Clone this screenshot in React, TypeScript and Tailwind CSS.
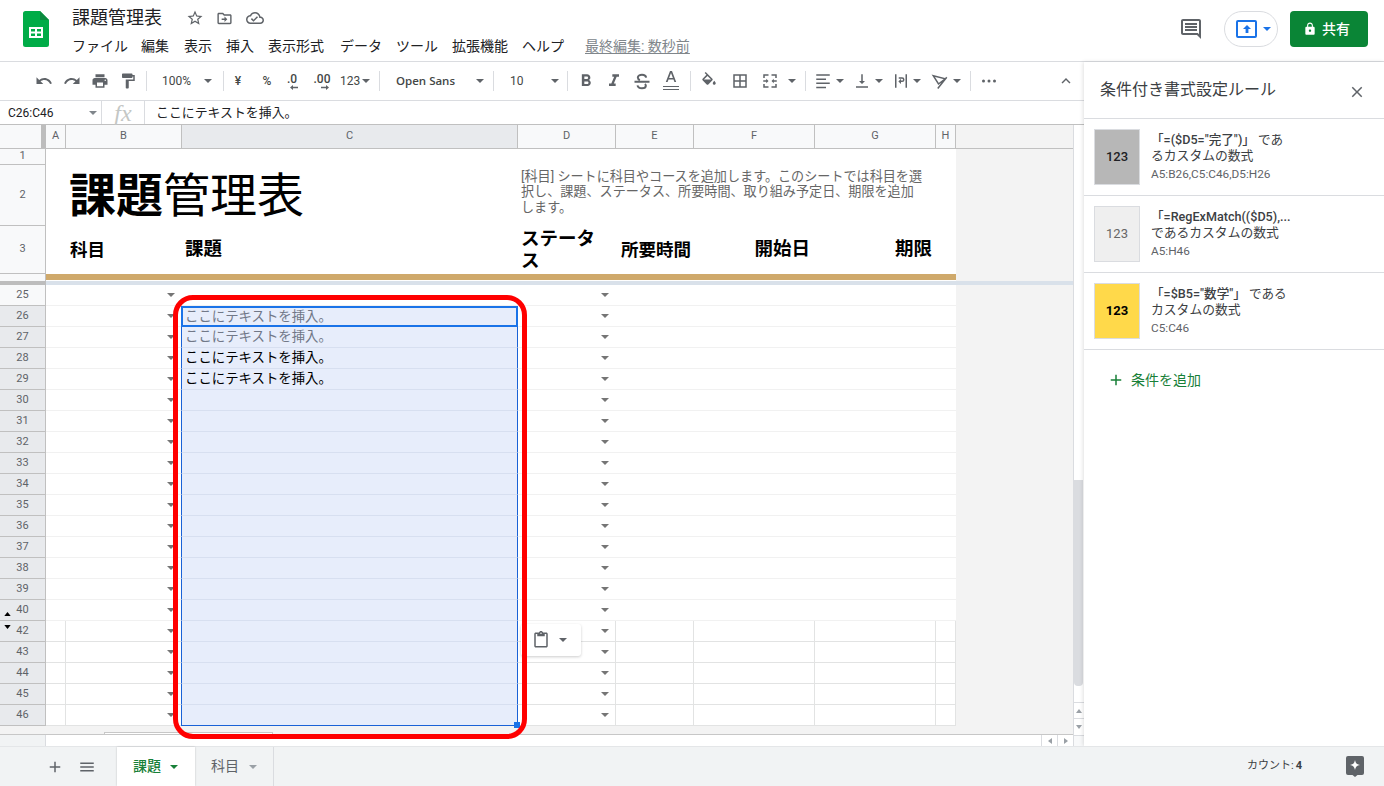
import React from "react";

const Ic = ({ d, s = 18, c = "text-[#5f6368]", ml = "" }: { d: string; s?: number; c?: string; ml?: string }) => (
  <svg viewBox="0 0 24 24" width={s} height={s} className={`shrink-0 fill-current ${c} ${ml}`}>
    <path d={d} />
  </svg>
);
const Caret = ({ ml = "", c = "text-[#5f6368]" }: { ml?: string; c?: string }) => (
  <svg viewBox="0 0 8 4" width={8} height={4} className={`shrink-0 fill-current ${c} ${ml}`}>
    <path d="M0 0h8L4 4z" />
  </svg>
);
const Sep = ({ ml }: { ml: string }) => <div className={`w-px h-5 shrink-0 bg-[#dadce0] ${ml}`} />;

const P = {
  undo: "M12.5 8c-2.65 0-5.05.99-6.9 2.6L2 7v9h9l-3.62-3.62c1.39-1.16 3.16-1.88 5.12-1.88 3.54 0 6.55 2.31 7.6 5.5l2.37-.78C21.08 11.03 17.15 8 12.5 8z",
  redo: "M18.4 10.6C16.55 8.99 14.15 8 11.5 8c-4.65 0-8.58 3.03-9.96 7.22L3.9 16c1.05-3.19 4.05-5.5 7.6-5.5 1.95 0 3.73.72 5.12 1.88L13 16h9V7l-3.6 3.6z",
  print: "M19 8H5c-1.66 0-3 1.34-3 3v6h4v4h12v-4h4v-6c0-1.66-1.34-3-3-3zm-3 11H8v-5h8v5zm3-7c-.55 0-1-.45-1-1s.45-1 1-1 1 .45 1 1-.45 1-1 1zm-1-9H6v4h12V3z",
  paint: "M18 4V3c0-.55-.45-1-1-1H5c-.55 0-1 .45-1 1v4c0 .55.45 1 1 1h12c.55 0 1-.45 1-1V6h1v4H9v11c0 .55.45 1 1 1h2c.55 0 1-.45 1-1v-9h8V4h-3z",
  star: "M22 9.24l-7.19-.62L12 2 9.19 8.63 2 9.24l5.46 4.73L5.82 21 12 17.27 18.18 21l-1.63-7.03L22 9.24zM12 15.4l-3.76 2.27 1-4.28-3.32-2.88 4.38-.38L12 6.1l1.71 4.04 4.38.38-3.32 2.88 1 4.28L12 15.4z",
  folder: "M20 6h-8l-2-2H4c-1.1 0-2 .9-2 2v12c0 1.1.9 2 2 2h16c1.1 0 2-.9 2-2V8c0-1.1-.9-2-2-2zm0 12H4V6h5.17l2 2H20v10zm-8-4H8v-2h4V9l4 4-4 4v-3z",
  cloud: "M19.35 10.04C18.67 6.59 15.64 4 12 4 9.11 4 6.6 5.64 5.35 8.04 2.34 8.36 0 10.91 0 14c0 3.31 2.69 6 6 6h13c2.76 0 5-2.24 5-5 0-2.64-2.05-4.78-4.65-4.96zM19 18H6c-2.21 0-4-1.79-4-4 0-2.05 1.53-3.76 3.56-3.97l1.07-.11.5-.95C8.08 7.14 9.94 6 12 6c2.62 0 4.88 1.86 5.39 4.43l.3 1.5 1.53.11c1.56.1 2.78 1.41 2.78 2.96 0 1.65-1.35 3-3 3zm-9-3.82l-2.09-2.09L6.5 13.5 10 17l6.01-6.01-1.41-1.41z",
  comment: "M21.99 4c0-1.1-.89-2-1.99-2H4c-1.1 0-2 .9-2 2v12c0 1.1.9 2 2 2h14l4 4-.01-18zM20 4v13.17L18.83 16H4V4h16zM6 12h12v2H6zm0-3h12v2H6zm0-3h12v2H6z",
  lock: "M18 8h-1V6c0-2.76-2.24-5-5-5S7 3.24 7 6v2H6c-1.1 0-2 .9-2 2v10c0 1.1.9 2 2 2h12c1.1 0 2-.9 2-2V10c0-1.1-.9-2-2-2zm-6 9c-1.1 0-2-.9-2-2s.9-2 2-2 2 .9 2 2-.9 2-2 2zm3.1-9H8.9V6c0-1.71 1.39-3.1 3.1-3.1 1.71 0 3.1 1.39 3.1 3.1v2z",
  close: "M19 6.41L17.59 5 12 10.59 6.41 5 5 6.41 10.59 12 5 17.59 6.41 19 12 13.41 17.59 19 19 17.59 13.41 12z",
  paste: "M19 2h-4.18C14.4.84 13.3 0 12 0S9.6.84 9.18 2H5c-1.1 0-2 .9-2 2v16c0 1.1.9 2 2 2h14c1.1 0 2-.9 2-2V4c0-1.1-.9-2-2-2zm-7 0c.55 0 1 .45 1 1s-.45 1-1 1-1-.45-1-1 .45-1 1-1zm7 18H5V4h2v3h10V4h2v16z",
  bold: "M15.6 10.79c.97-.67 1.65-1.77 1.65-2.79 0-2.26-1.75-4-4-4H7v14h7.04c2.09 0 3.71-1.7 3.71-3.79 0-1.52-.86-2.82-2.15-3.42zM10 6.5h3c.83 0 1.5.67 1.5 1.5s-.67 1.5-1.5 1.5h-3v-3zm3.5 9H10v-3h3.5c.83 0 1.5.67 1.5 1.5s-.67 1.5-1.5 1.5z",
  italic: "M10 4v3h2.21l-3.42 8H6v3h8v-3h-2.21l3.42-8H18V4z",
  fill: "M16.56 8.94L7.62 0 6.21 1.41l2.38 2.38-5.15 5.15c-.59.59-.59 1.54 0 2.12l5.5 5.5c.29.29.68.44 1.06.44s.77-.15 1.06-.44l5.5-5.5c.59-.58.59-1.53 0-2.12zM5.21 10L10 5.21 14.79 10H5.21zM19 11.5s-2 2.17-2 3.5c0 1.1.9 2 2 2s2-.9 2-2c0-1.33-2-3.5-2-3.5z",
  borders: "M3 3v18h18V3H3zm8 16H5v-6h6v6zm0-8H5V5h6v6zm8 8h-6v-6h6v6zm0-8h-6V5h6v6z",
  align: "M3 3h18v2H3zM3 8.500h13v2H3zM3 14h18v2H3zM3 19.500h13v2H3z",
  valign: "M11 3h2v9h3l-4 4-4-4h3zM4 19h16v2H4z",
  up: "M7.41 15.41L12 10.83l4.59 4.58L18 14l-6-6-6 6z",
  plus: "M19 13h-6v6h-2v-6H5v-2h6V5h2v6h6v2z",
  menu: "M3 18h18v-2H3v2zm0-5h18v-2H3v2zm0-7v2h18V6H3z",
};

const Logo = () => (
  <svg viewBox="0 0 26 36" width={26} height={36} className="shrink-0">
    <path d="M17 0H2.5A2.5 2.5 0 0 0 0 2.5v31A2.5 2.5 0 0 0 2.5 36h21a2.5 2.5 0 0 0 2.5-2.5V9z" fill="#00ac47" />
    <path d="M17 0l9 9h-9z" fill="#0a8a3e" />
    <path fillRule="evenodd" d="M6 16h14v11H6zm2 2v2.500h4V18zm6 0v2.500h4V18zm-6 4.500V25h4v-2.500zm6 0V25h4v-2.500z" fill="#fff" />
  </svg>
);

const Header = () => (
  <header className="h-[62px] shrink-0 border-b border-[#dadce0] flex bg-white">
    <div className="w-[72px] shrink-0 pt-[11px] pl-[23px]"><Logo /></div>
    <div className="flex-1 flex flex-col">
      <div className="flex items-center h-[24px] mt-[6px]">
        <span className="text-[18px] leading-6 text-[#202124] w-[90px]">課題管理表</span>
        <Ic d={P.star} s={18} ml="ml-[24px]" />
        <Ic d={P.folder} s={17} ml="ml-[12px]" />
        <Ic d={P.cloud} s={18} ml="ml-[13px]" />
      </div>
      <nav className="flex items-center mt-[4px] h-[24px] text-[14px] text-[#202124] whitespace-nowrap">
        <span className="w-[55px]">ファイル</span>
        <span className="ml-[14px]">編集</span>
        <span className="ml-[15px]">表示</span>
        <span className="ml-[14px]">挿入</span>
        <span className="ml-[14px]">表示形式</span>
        <span className="ml-[16px]">データ</span>
        <span className="ml-[14px]">ツール</span>
        <span className="ml-[14px]">拡張機能</span>
        <span className="ml-[14px]">ヘルプ</span>
        <span className="ml-[21px] text-[14px] text-[#80868b] underline underline-offset-2">最終編集: 数秒前</span>
      </nav>
    </div>
    <div className="flex items-start pt-[11px] pr-[16px]">
      <Ic d={P.comment} s={24} ml="mt-[6px]" />
      <div className="ml-[21px] w-[54px] h-[36px] rounded-full border border-[#dadce0] flex items-center pl-[11px]">
        <div className="w-[21px] h-[18px] border-2 border-[#1a73e8] rounded-[2px] flex items-center justify-center">
          <svg viewBox="0 0 10 10" width={10} height={10} className="fill-[#1a73e8]"><path d="M5 1 1 5h2.600v4h2.800V5H9z" /></svg>
        </div>
        <Caret ml="ml-[6px]" c="text-[#1a73e8]" />
      </div>
      <div className="ml-[12px] w-[78px] h-[36px] rounded bg-[#0a8536] flex items-center pl-[13px] text-white text-[14px] font-medium">
        <Ic d={P.lock} s={14} c="text-white" />
        <span className="ml-[5px]">共有</span>
      </div>
    </div>
  </header>
);

const Toolbar = () => (
  <div className="h-[39px] shrink-0 border-b border-[#dadce0] flex items-center pl-[35px] text-[12px] text-[#444746]">
    <Ic d={P.undo} />
    <Ic d={P.redo} ml="ml-[10px]" />
    <Ic d={P.print} ml="ml-[10px]" />
    <Ic d={P.paint} ml="ml-[10px]" />
    <Sep ml="ml-[9px]" />
    <span className="ml-[15px] w-[29px]">100%</span>
    <Caret ml="ml-[13px]" />
    <Sep ml="ml-[11px]" />
    <span className="ml-[9px] w-[10px] text-center font-medium">¥</span>
    <span className="ml-[18px] w-[12px] text-center font-medium">%</span>
    <span className="ml-[12px] w-[14px] flex flex-col items-center leading-none font-medium">
      <span className="h-[12px]">.0</span>
      <svg viewBox="0 0 8 5" width={8} height={5} className="fill-[#5f6368] ml-[4px]"><path d="M3 0 0 2.500 3 5V3.300h5V1.700H3z" /></svg>
    </span>
    <span className="ml-[14px] w-[18px] flex flex-col items-center leading-none font-medium">
      <span className="h-[12px]">.00</span>
      <svg viewBox="0 0 8 5" width={8} height={5} className="fill-[#5f6368] ml-[6px]"><path d="M5 0l3 2.500L5 5V3.300H0V1.700h5z" /></svg>
    </span>
    <span className="ml-[9px] w-[21px]">123</span>
    <Caret ml="ml-[1px]" />
    <Sep ml="ml-[9px]" />
    <span className="ml-[16px] w-[58px] font-['Open_Sans'] font-semibold text-[11.5px] whitespace-nowrap">Open Sans</span>
    <Caret ml="ml-[22px]" />
    <Sep ml="ml-[9px]" />
    <span className="ml-[16px] w-[14px]">10</span>
    <Caret ml="ml-[27px]" />
    <Sep ml="ml-[8px]" />
    <Ic d={P.bold} s={20} ml="ml-[8px]" />
    <Ic d={P.italic} s={20} ml="ml-[8px]" />
    <svg viewBox="0 0 24 24" width={20} height={20} className="shrink-0 ml-[8px] fill-none stroke-[#5f6368] stroke-[2.4]">
      <path d="M17 8c-.4-2.400-2.500-3.500-5-3.500-2.800 0-5 1.400-5 3.400 0 1.500 1 2.400 2.500 3M3 13h18M15.500 15.500c.7.600 1.100 1.300 1.100 2.100 0 2-2 3-4.600 3-2.800 0-5-1.200-5.400-3.400" />
    </svg>
    <svg viewBox="0 0 18 24" width={18} height={24} className="shrink-0 ml-[10px] fill-[#5f6368]">
      <path d="M8 2 3.800 13h1.800l.9-2.400h5l.9 2.400h1.800L10 2H8zM7.100 9 9 3.900 10.900 9H7.100z" />
      <path d="M1 17h16v1H1zM1 20h16v1H1z" />
    </svg>
    <Sep ml="ml-[10px]" />
    <Ic d={P.fill} ml="ml-[9px]" />
    <Ic d={P.borders} ml="ml-[13px]" />
    <svg viewBox="0 0 24 24" width={18} height={18} className="shrink-0 ml-[12px] fill-[#5f6368]">
      <path d="M3 3h7v2H5v3H3zM14 3h7v5h-2V5h-5zM3 16h2v3h5v2H3zM19 16h2v5h-7v-2h5zM3 11h4V9l3 3-3 3v-2H3zM21 11h-4V9l-3 3 3 3v-2h4z" />
    </svg>
    <Caret ml="ml-[9px]" />
    <Sep ml="ml-[9px]" />
    <Ic d={P.align} ml="ml-[8px]" />
    <Caret ml="ml-[4px]" />
    <Ic d={P.valign} ml="ml-[9px]" />
    <Caret ml="ml-[4px]" />
    <svg viewBox="0 0 24 24" width={18} height={18} className="shrink-0 ml-[9px] fill-[#5f6368]">
      <path d="M4 3h2v18H4zM18 3h2v18h-2zM9 7h4.500a3.200 3.200 0 0 1 0 6.400H12V16l-3.500-3.500L12 9v2.400h1.500a1.200 1.200 0 0 0 0-2.400H9z" />
    </svg>
    <Caret ml="ml-[3px]" />
    <svg viewBox="0 0 24 24" width={18} height={18} className="shrink-0 ml-[10px] fill-none stroke-[#5f6368] stroke-2">
      <path d="M3 5l16 4-9 7zM21 7 9 22" />
    </svg>
    <Caret ml="ml-[4px]" />
    <Sep ml="ml-[9px]" />
    <svg viewBox="0 0 18 18" width={18} height={18} className="shrink-0 ml-[9px] fill-[#5f6368]">
      <circle cx="3.500" cy="9" r="1.500" /><circle cx="9" cy="9" r="1.500" /><circle cx="14.500" cy="9" r="1.500" />
    </svg>
    <Ic d={P.up} ml="ml-[59px]" />
  </div>
);

const FormulaBar = () => (
  <div className="h-[24px] shrink-0 border-b border-[#c0c0c0] flex items-center text-[#202124]">
    <div className="w-[102px] h-full shrink-0 border-r border-[#dadce0] flex items-center pl-[8px] pt-px text-[12px]">
      <span className="w-[81px]">C26:C46</span>
      <Caret c="text-[#80868b]" />
    </div>
    <div className="w-[43px] h-full shrink-0 border-r border-[#dadce0] flex items-center justify-center font-['Liberation_Serif'] italic text-[24px] text-[#c4c7c5]">fx</div>
    <span className="ml-[11px] pt-px text-[12.9px]">ここにテキストを挿入。</span>
  </div>
);

const rows = [25, 26, 27, 28, 29, 30, 31, 32, 33, 34, 35, 36, 37, 38, 39, 40, 42, 43, 44, 45, 46];
const cellTexts: Record<number, string> = { 26: "text-[#717888]", 27: "text-[#717888]", 28: "text-black", 29: "text-black" };

const ColHead = ({ w, label, sel = false }: { w: string; label: string; sel?: boolean }) => (
  <div className={`${w} h-full shrink-0 border-r border-[#c0c0c0] flex items-center justify-center text-[11px] text-[#5f6368] ${sel ? "bg-[#e8eaed]" : "bg-[#f8f9fa]"}`}>
    {label}
  </div>
);
const RowHead = ({ h, label }: { h: string; label: string }) => (
  <div className={`${h} w-[46px] shrink-0 bg-[#f8f9fa] border-r border-b border-[#c0c0c0] flex items-center justify-center text-[11px] text-[#5f6368]`}>{label}</div>
);

const Tri = () => <Caret c="text-[#757575]" />;

const GridRow = ({ n }: { n: number }) => {
  const ruled = n >= 42;
  const line = ruled ? "border-[#e2e3e3]" : "border-[#f1f1f1]";
  const v = ruled ? "border-r" : "";
  const sel = n >= 26;
  return (
    <div className="flex h-[21px]">
      <div className={`relative w-[46px] shrink-0 border-r border-b border-[#c0c0c0] flex items-center justify-center text-[11px] text-[#5f6368] ${sel ? "bg-[#e8eaed]" : "bg-[#f8f9fa]"}`}>
        {n}
        {n === 40 && <svg viewBox="0 0 8 5" width={7} height={4} className="absolute left-[4px] top-[12px] fill-black"><path d="M0 5h8L4 0z" /></svg>}
        {n === 42 && <svg viewBox="0 0 8 5" width={7} height={4} className="absolute left-[4px] top-[4px] fill-black"><path d="M0 0h8L4 5z" /></svg>}
      </div>
      <div className={`w-[20px] shrink-0 bg-white border-b ${v} ${line}`} />
      <div className={`w-[115px] shrink-0 bg-white border-b ${line} flex items-center justify-end pr-[6px]`}><Tri /></div>
      {n === 25 && <div className="w-[337px] shrink-0 bg-white border-b border-[#f1f1f1]" />}
      {n === 26 && (
        <div className="w-[337px] shrink-0 bg-[#e7edfb] border-2 border-[#1a73e8] flex items-center pl-[2px] pt-px text-[13.4px] text-[#717888]">ここにテキストを挿入。</div>
      )}
      {n > 26 && (
        <div className={`relative w-[337px] shrink-0 bg-[#e7edfb] border-x border-x-[#1a62d6] border-b flex items-center pl-[3px] pt-px text-[13.4px] ${n === 46 ? "border-b-[#1a62d6]" : "border-b-[#d7dff0]"} ${cellTexts[n] ?? ""}`}>
          {cellTexts[n] ? "ここにテキストを挿入。" : ""}
          {n === 46 && <div className="absolute -right-[3px] -bottom-[3px] w-[6px] h-[6px] bg-[#1a73e8]" />}
        </div>
      )}
      <div className={`w-[98px] shrink-0 bg-white border-b ${v} ${line} flex items-center justify-end ${ruled ? "pr-[6px]" : "pr-[7px]"}`}><Tri /></div>
      <div className={`w-[78px] shrink-0 bg-white border-b ${v} ${line}`} />
      <div className={`w-[121px] shrink-0 bg-white border-b ${v} ${line}`} />
      <div className={`w-[121px] shrink-0 bg-white border-b ${v} ${line}`} />
      <div className={`w-[20px] shrink-0 bg-white border-b ${v} ${line}`} />
    </div>
  );
};

const Grid = () => (
  <div className="flex-1 flex min-h-0">
    <div className="w-[1073px] shrink-0 flex flex-col bg-[#f3f3f3]">
      <div className="flex h-[24px] border-b border-[#c0c0c0]">
        <div className="w-[46px] shrink-0 bg-[#f8f9fa] flex justify-end"><div className="w-[5px] h-full bg-[#bdbdbd]" /></div>
        <ColHead w="w-[20px]" label="A" />
        <ColHead w="w-[116px]" label="B" />
        <ColHead w="w-[336px]" label="C" sel />
        <ColHead w="w-[98px]" label="D" />
        <ColHead w="w-[78px]" label="E" />
        <ColHead w="w-[121px]" label="F" />
        <ColHead w="w-[121px]" label="G" />
        <ColHead w="w-[20px]" label="H" />
      </div>
      <div className="flex h-[16px]">
        <RowHead h="h-full" label="1" />
        <div className="w-[910px] bg-white" />
      </div>
      <div className="flex h-[61px]">
        <RowHead h="h-full" label="2" />
        <div className="w-[472px] shrink-0 bg-white pl-[23px] flex items-center text-[47px] text-black leading-none">
          <span className="font-bold">課題</span><span>管理表</span>
        </div>
        <div className="w-[438px] shrink-0 bg-white pl-[3px] pb-[7px] text-[13.1px] leading-[15.5px] text-[#666666] flex items-center whitespace-nowrap">
          <span>[科目] シートに科目やコースを追加します。このシートでは科目を選<br />択し、課題、ステータス、所要時間、取り組み予定日、期限を追加<br />します。</span>
        </div>
      </div>
      <div className="flex h-[48px] text-[18.5px] font-bold text-black">
        <RowHead h="h-full font-normal" label="3" />
        <div className="w-[20px] shrink-0 bg-white" />
        <div className="w-[116px] shrink-0 bg-white pl-[4px] flex items-center text-[17.5px]">科目</div>
        <div className="w-[336px] shrink-0 bg-white pl-[3px] flex items-center">課題</div>
        <div className="w-[98px] shrink-0 bg-white pl-[3px] flex items-center leading-[22px]"><span>ステータ<br />ス</span></div>
        <div className="w-[78px] shrink-0 bg-white pl-[5px] flex items-center whitespace-nowrap text-[17.5px]">所要時間</div>
        <div className="w-[121px] shrink-0 bg-white pr-[5px] flex items-center justify-end">開始日</div>
        <div className="w-[121px] shrink-0 bg-white pr-[4px] flex items-center justify-end">期限</div>
        <div className="w-[20px] shrink-0 bg-white" />
      </div>
      <div className="flex h-[7px]">
        <div className="w-[46px] shrink-0 bg-[#f8f9fa] border-r border-[#c0c0c0]" />
        <div className="w-[910px] bg-white"><div className="h-[6px] bg-[#cfa96b]" /></div>
      </div>
      <div className="flex h-[4px] shrink-0">
        <div className="w-[46px] shrink-0 bg-[#bdbdbd]" />
        <div className="flex-1 bg-[#d9e1ea]" />
      </div>
      <div className="relative flex flex-col">
        {rows.map((n) => <GridRow key={n} n={n} />)}
        <div className="absolute z-20 left-[173px] top-[10px] w-[354px] h-[444px] border-[5px] border-[#ff0000] rounded-[20px]" />
        <div className="absolute z-10 left-[521px] top-[339px] w-[60px] h-[32px] bg-white rounded-[3px] shadow-[0_1px_3px_rgba(0,0,0,0.2)] flex items-center pl-[11px]">
          <Ic d={P.paste} s={18} />
          <Caret ml="ml-[9px]" />
        </div>
      </div>
      <div className="flex h-[9px] shrink-0 border-b border-[#c7c7c7] items-end">
        <div className="ml-[104px] w-[169px] h-[2px] bg-white border-t border-x border-[#c7c7c7]" />
      </div>
      <div className="flex h-[11px] shrink-0 bg-white">
        <div className="w-[46px] h-full border-r border-[#dadce0] bg-[#f1f3f4]" />
        <div className="flex-1" />
        <div className="w-[16px] h-full border-l border-[#dadce0] flex items-center justify-center">
          <svg viewBox="0 0 4 6" width={4} height={6} className="fill-[#9aa0a6]"><path d="M4 0v6L0 3z" /></svg>
        </div>
        <div className="w-[16px] h-full border-l border-[#dadce0] flex items-center justify-center">
          <svg viewBox="0 0 4 6" width={4} height={6} className="fill-[#9aa0a6]"><path d="M0 0v6l4-3z" /></svg>
        </div>
      </div>
    </div>
    <div className="w-[11px] shrink-0 border-l border-[#dadce0] bg-white flex flex-col">
      <div className="h-[355px] shrink-0" />
      <div className="h-[206px] shrink-0 bg-[#dadce0] rounded-b-[4px] mr-px" />
      <div className="flex-1" />
      <div className="h-[16px] shrink-0 border-t border-[#dadce0] flex items-center justify-center">
        <svg viewBox="0 0 6 4" width={6} height={4} className="fill-[#9aa0a6]"><path d="M0 4h6L3 0z" /></svg>
      </div>
      <div className="h-[17px] shrink-0 border-t border-[#dadce0] flex items-center justify-center">
        <svg viewBox="0 0 6 4" width={6} height={4} className="fill-[#9aa0a6]"><path d="M0 0h6L3 4z" /></svg>
      </div>
      <div className="h-[11px] shrink-0 border-t border-[#dadce0] bg-[#f8f9fa]" />
    </div>
  </div>
);

const Rule = ({ swatch, l1, l2, range }: { swatch: string; l1: React.ReactNode; l2: string; range: string }) => (
  <div className="h-[77px] shrink-0 border-b border-[#dadce0] flex pl-[10px] pt-[10px]">
    <div className={`w-[46px] h-[56px] shrink-0 border border-[#dadce0] flex items-center justify-center text-[13px] ${swatch}`}>123</div>
    <div className="ml-[11px] pt-[3px] text-[12.8px] leading-[16px] text-[#3c4043] whitespace-nowrap">
      <div className="text-[12.6px]">{l1}</div>
      <div>{l2}</div>
      <div className="mt-[2px] text-[11.8px] text-[#5f6368]">{range}</div>
    </div>
  </div>
);

const Panel = () => (
  <aside className="w-[300px] shrink-0 bg-white flex flex-col z-30 shadow-[-1px_0_4px_rgba(0,0,0,0.12)]">
    <div className="h-[57px] shrink-0 border-b border-[#dadce0] flex items-center pl-[16px] pr-[18px] justify-between">
      <span className="text-[16px] text-[#3c4043]">条件付き書式設定ルール</span>
      <Ic d={P.close} s={18} ml="mt-[3px]" />
    </div>
    <Rule swatch="bg-[#b7b7b7] text-[#202124] font-medium" l1={<><b className="font-medium">「=($D5="完了")」</b> であ</>} l2="るカスタムの数式" range="A5:B26,C5:C46,D5:H26" />
    <Rule swatch="bg-[#efefef] text-[#666666]" l1={<b className="font-medium">「=RegExMatch(($D5),...</b>} l2="であるカスタムの数式" range="A5:H46" />
    <Rule swatch="bg-[#ffd94a] text-black font-bold" l1={<><b className="font-medium">「=$B5="数学"」</b> である</>} l2="カスタムの数式" range="C5:C46" />
    <div className="flex items-center pl-[23px] mt-[18px] h-[24px] text-[14px] text-[#188038]">
      <Ic d={P.plus} s={18} c="text-[#188038]" />
      <span className="ml-[6px]">条件を追加</span>
    </div>
  </aside>
);

const Tabs = () => (
  <footer className="h-[40px] shrink-0 bg-[#f1f3f4] border-t border-[#e4e6e8] flex items-stretch z-30">
    <div className="flex items-center w-[117px] shrink-0 pl-[46px]">
      <Ic d={P.plus} s={18} />
      <Ic d={P.menu} s={18} ml="ml-[14px]" />
    </div>
    <div className="w-[78px] shrink-0 bg-white flex items-center pl-[16px] text-[14px] font-medium text-[#188038] shadow-[0_0_2px_rgba(0,0,0,0.2)]">
      <span className="w-[29px]">課題</span>
      <Caret ml="ml-[8px]" c="text-[#188038]" />
    </div>
    <div className="w-[78px] shrink-0 ml-px border-r border-[#dadce0] flex items-center pl-[15px] text-[14px] text-[#5f6368]">
      <span className="w-[29px]">科目</span>
      <Caret ml="ml-[9px]" c="text-[#9aa0a6]" />
    </div>
    <div className="flex-1" />
    <div className="flex items-center text-[11px] text-[#3c4043] w-[56px] shrink-0 whitespace-nowrap">
      カウント: <b className="ml-[2px] font-bold">4</b>
    </div>
    <div className="flex items-center ml-[43px] mr-[20px]">
      <svg viewBox="0 0 18 21" width={18} height={21} className="shrink-0">
        <path d="M2 0h14a2 2 0 0 1 2 2v15a2 2 0 0 1-2 2h-4.500L9 21l-2.500-2H2a2 2 0 0 1-2-2V2a2 2 0 0 1 2-2z" fill="#5f6368" />
        <path d="M9 4c.6 3.200 1.800 4.400 5 5-3.200.6-4.400 1.800-5 5-.6-3.200-1.800-4.400-5-5 3.200-.6 4.400-1.800 5-5z" fill="#fff" />
      </svg>
    </div>
  </footer>
);

export default function App() {
  return (
    <div className="w-[1384px] h-[786px] overflow-hidden flex flex-col bg-white font-['Roboto','Noto_Sans_CJK_JP',sans-serif]">
      <Header />
      <div className="flex-1 flex min-h-0">
        <div className="w-[1084px] shrink-0 flex flex-col">
          <Toolbar />
          <FormulaBar />
          <Grid />
        </div>
        <Panel />
      </div>
      <Tabs />
    </div>
  );
}
